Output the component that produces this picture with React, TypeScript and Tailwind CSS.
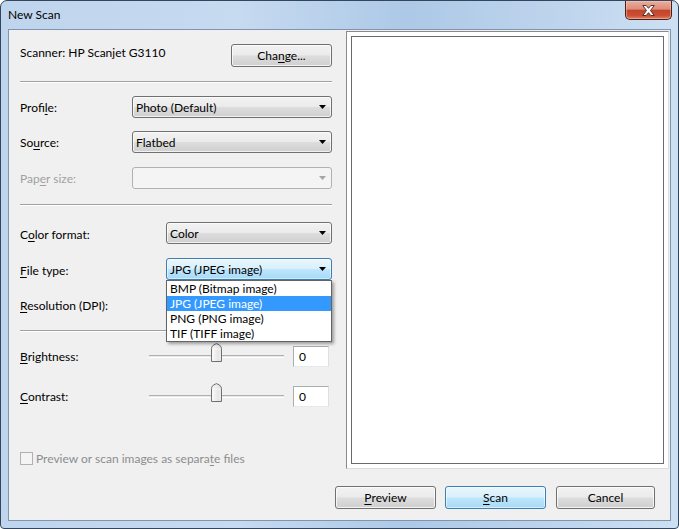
import React from 'react';

/**
 * New Scan dialog (Windows 7 style)
 */

function Mn({ children }: { children: React.ReactNode }) {
  return <span className="underline decoration-1 underline-offset-[2px]">{children}</span>;
}

function WinButton({
  children,
  primary,
  className = '',
}: {
  children: React.ReactNode;
  primary?: boolean;
  className?: string;
}) {
  return (
    <div
      className={`h-[23px] rounded-[3px] border flex items-center justify-center leading-[16px] ${
        primary
          ? 'border-[#3c7fb1] bg-[linear-gradient(to_bottom,#eaf6fd_0%,#d9f0fc_48%,#bee6fd_52%,#a7d9f5_100%)] shadow-[inset_0_0_0_1px_rgba(255,255,255,0.55)]'
          : 'border-[#707070] bg-[linear-gradient(to_bottom,#f2f2f2_0%,#ebebeb_48%,#dddddd_52%,#cfcfcf_100%)] shadow-[inset_0_0_0_1px_rgba(255,255,255,0.75)]'
      } ${className}`}
    >
      {children}
    </div>
  );
}

function Arrow({ disabled }: { disabled?: boolean }) {
  return (
    <svg width="7" height="4" viewBox="0 0 7 4" className="shrink-0">
      <path d="M0 0H7L3.5 4Z" fill={disabled ? '#a6a6a6' : '#000'} />
    </svg>
  );
}

function Combo({
  value,
  disabled,
  active,
  className = '',
  children,
}: {
  value?: string;
  disabled?: boolean;
  active?: boolean;
  className?: string;
  children?: React.ReactNode;
}) {
  let skin =
    'border-[#707070] bg-[linear-gradient(to_bottom,#f2f2f2_0%,#ebebeb_48%,#dddddd_52%,#cfcfcf_100%)] shadow-[inset_0_0_0_1px_rgba(255,255,255,0.7)]';
  if (disabled) skin = 'border-[#adb2b5] bg-[#f4f4f4]';
  if (active)
    skin =
      'border-[#3c7fb1] bg-[linear-gradient(to_bottom,#eaf6fd_0%,#d9f0fc_48%,#bee6fd_52%,#a7d9f5_100%)] shadow-[inset_0_0_0_1px_rgba(255,255,255,0.5)]';
  return (
    <div className={`relative h-[22px] ${className}`}>
      <div className={`h-full rounded-[3px] border flex items-center pl-[3px] pr-[5px] ${skin}`}>
        <span className="flex-1 whitespace-nowrap leading-[16px] pt-[1px]">{value}</span>
        <Arrow disabled={disabled} />
      </div>
      {children}
    </div>
  );
}

function Separator() {
  return <div className="h-[2px] border-t border-[#a0a0a0] border-b border-b-white" />;
}

function Slider() {
  return (
    <div className="relative w-[135px] h-[21px] flex items-center">
      <div className="w-full h-[3px] border-t border-[#b0b0b0] border-b border-b-white bg-[#e7e7e7]" />
      <svg
        width="11"
        height="19"
        viewBox="0 0 11 19"
        className="absolute left-[62px] top-[-3px]"
      >
        <defs>
          <linearGradient id="thumb" x1="0" y1="0" x2="1" y2="0">
            <stop offset="0" stopColor="#f9f9f9" />
            <stop offset="1" stopColor="#dedede" />
          </linearGradient>
        </defs>
        <path
          d="M0.5 18.5V5.5Q0.5 3 3 1.8L5.5 0.6L8 1.8Q10.5 3 10.5 5.5V18.5Z"
          fill="url(#thumb)"
          stroke="#707070"
        />
        <path d="M2 17V6H9V17" fill="none" stroke="#ffffff" strokeOpacity="0.6" />
      </svg>
    </div>
  );
}

function NumberBox() {
  return (
    <div className="w-[36px] h-[21px] border border-[#abadb3] border-b-[#e3e9ef] border-r-[#dbdfe6] bg-white flex items-center pl-[5px] leading-[16px]">
      0
    </div>
  );
}

function CloseGlyph() {
  return (
    <svg width="15" height="13" viewBox="0 0 15 13">
      <path
        d="M1.8 1.5H5.2L7.5 4.3L9.8 1.5H13.2L9.5 6.5L13.2 11.5H9.8L7.5 8.7L5.2 11.5H1.8L5.5 6.5Z"
        fill="#ffffff"
        stroke="#4a2219"
        strokeWidth="0.9"
        strokeLinejoin="round"
      />
    </svg>
  );
}

export default function App() {
  const fileTypes = ['BMP (Bitmap image)', 'JPG (JPEG image)', 'PNG (PNG image)', 'TIF (TIFF image)'];

  return (
    <div className="w-[679px] h-[529px] font-['Lato',sans-serif] text-[12px] text-black select-none">
      <div className="w-full h-full rounded-t-[7px] rounded-b-[4px] border border-[#34465c] bg-[linear-gradient(to_right,#bfd5ed_0%,#c6daf0_35%,#adc9e7_60%,#bcd3ec_80%,#cde0f3_100%)] flex flex-col overflow-hidden">
        {/* Title bar */}
        <div className="h-[28px] flex items-start justify-between shrink-0">
          <div className="pl-[7px] pt-[6px] leading-[16px]">New Scan</div>
          <div className="mr-[6px] w-[47px] h-[19px] rounded-b-[5px] border border-t-0 border-[#4b2018] bg-[linear-gradient(to_bottom,#e9ad9e_0%,#dc8c79_45%,#c4432a_52%,#c94f35_80%,#de7e62_100%)] shadow-[inset_0_0_0_1px_rgba(255,210,200,0.45)] flex items-center justify-center">
            <CloseGlyph />
          </div>
        </div>

        {/* Client area */}
        <div className="mx-[7px] h-[492px] border border-[#7f94ae] bg-[#f0f0f0] flex flex-col">
          <div className="h-[440px] flex">
            {/* Settings column */}
            <div className="w-[337px] pl-[11px] pr-[14px] flex flex-col">
              <div className="mt-[14px] h-[21px] flex items-start justify-between">
                <span className="pt-[1px] leading-[16px]">Scanner: HP Scanjet G3110</span>
                <WinButton className="w-[101px] h-[21px]">
                  Cha<Mn>n</Mn>ge...
                </WinButton>
              </div>

              <div className="mt-[16px]">
                <Separator />
              </div>

              <div className="mt-[13px] h-[22px] flex items-center">
                <span className="w-[112px] pt-[1px]">
                  Profi<Mn>l</Mn>e:
                </span>
                <Combo value="Photo (Default)" className="w-[200px]" />
              </div>

              <div className="mt-[13px] h-[22px] flex items-center">
                <span className="w-[112px] pt-[1px]">
                  So<Mn>u</Mn>rce:
                </span>
                <Combo value="Flatbed" className="w-[200px]" />
              </div>

              <div className="mt-[14px] h-[22px] flex items-center">
                <span className="w-[112px] pt-[1px] text-[#a0a0a0]">
                  Pap<Mn>e</Mn>r size:
                </span>
                <Combo disabled className="w-[200px]" />
              </div>

              <div className="mt-[15px]">
                <Separator />
              </div>

              <div className="mt-[16px] h-[22px] flex items-center">
                <span className="w-[146px] pt-[4px]">
                  C<Mn>o</Mn>lor format:
                </span>
                <Combo value="Color" className="w-[166px]" />
              </div>

              <div className="relative z-10 mt-[14px] h-[22px] flex items-center">
                <span className="w-[146px] pt-[4px]">
                  <Mn>F</Mn>ile type:
                </span>
                <Combo value="JPG (JPEG image)" active className="w-[166px]">
                  {/* Open list */}
                  <div className="absolute left-0 top-[22px] w-[166px] border border-[#646464] bg-white shadow-[2px_2px_3px_rgba(0,0,0,0.35)]">
                    {fileTypes.map((t) => (
                      <div
                        key={t}
                        className={`h-[15px] leading-[15px] pl-[3px] ${
                          t.startsWith('JPG') ? 'bg-[#3399ff] text-white' : ''
                        }`}
                      >
                        {t}
                      </div>
                    ))}
                  </div>
                </Combo>
              </div>

              <div className="mt-[14px] h-[22px] flex items-center">
                <span className="w-[146px] pt-[2px]">
                  <Mn>R</Mn>esolution (DPI):
                </span>
                <Combo className="w-[166px]" />
              </div>

              <div className="mt-[14px]">
                <Separator />
              </div>

              <div className="mt-[14px] h-[21px] flex items-center">
                <span className="w-[129px] pt-[1px]">
                  <Mn>B</Mn>rightness:
                </span>
                <Slider />
                <div className="ml-[9px]">
                  <NumberBox />
                </div>
              </div>

              <div className="mt-[19px] h-[21px] flex items-center">
                <span className="w-[129px] pt-[1px]">
                  <Mn>C</Mn>ontrast:
                </span>
                <Slider />
                <div className="ml-[9px]">
                  <NumberBox />
                </div>
              </div>

              <div className="mt-[45px] h-[13px] flex items-center gap-[3px] text-[#8d8d8d]">
                <div className="w-[13px] h-[13px] border border-[#b1b1b1] bg-[#f4f4f4]" />
                <span className="leading-[16px]">
                  Preview or scan images as separa<Mn>t</Mn>e files
                </span>
              </div>
            </div>

            {/* Preview column */}
            <div className="flex-1 pt-[1px] pr-[1px]">
              <div className="h-[438px] border border-[#8a8a8a] border-b-[#dcdcdc] border-r-[#dcdcdc] bg-white p-[4px]">
                <div className="h-full border border-[#6b6b6b] bg-white" />
              </div>
            </div>
          </div>

          {/* Buttons */}
          <div className="mt-[16px] pl-[326px] flex">
            <WinButton className="w-[101px]">
              <Mn>P</Mn>review
            </WinButton>
            <WinButton primary className="ml-[9px] w-[101px]">
              <Mn>S</Mn>can
            </WinButton>
            <WinButton className="ml-[10px] w-[99px]">Cancel</WinButton>
          </div>
        </div>
      </div>
    </div>
  );
}
